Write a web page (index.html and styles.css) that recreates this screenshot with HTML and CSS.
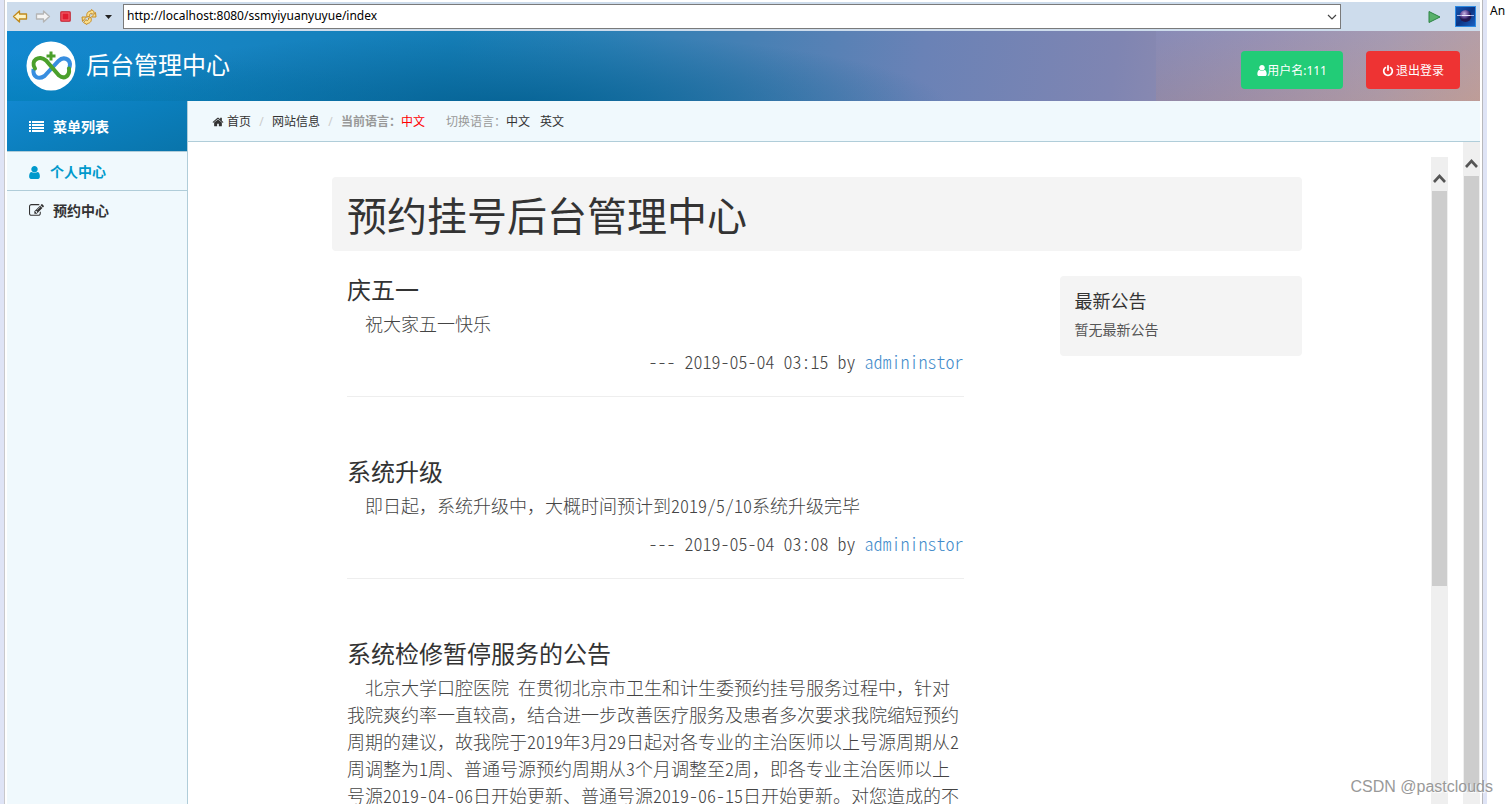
FILE: index.html
```html
<!DOCTYPE html>
<html lang="zh-CN">
<head>
<meta charset="utf-8">
<title>后台管理中心</title>
<link rel="stylesheet" href="styles.css">
</head>
<body>
<svg class="defs" width="0" height="0" aria-hidden="true">
  <symbol id="user" viewBox="0 0 1280 1792"><path d="M1280 1399q0 109-62.500 187t-150.500 78h-854q-88 0-150.500-78t-62.500-187q0-85 8.500-160.500t31.500-152 58.500-131 94-89 134.500-34.500q131 128 313 128t313-128q76 0 134.500 34.500t94 89 58.500 131 31.500 152 8.500 160.500zm-256-887q0 159-112.500 271.500t-271.500 112.500-271.500-112.500-112.500-271.500 112.500-271.500 271.500-112.500 271.500 112.500 112.500 271.500z"/></symbol>
  <symbol id="up" viewBox="0 0 17 34"><path d="M3 25l5.500-6 5.500 6" fill="none" stroke="#555" stroke-width="2.600"/></symbol>
</svg>
<div class="window">
  <div class="rail rail-left"></div>
  <div class="browser">
    <form class="toolbar">
      <button type="button" class="tool" aria-label="后退"><svg width="16" height="16" viewBox="0 0 16 16"><path d="M1.500 7.500l6-5.500v3h7v5h-7v3z" fill="#fdf3c4" stroke="#c08a1e" stroke-width="1.300" stroke-linejoin="round"/></svg></button>
      <button type="button" class="tool" aria-label="前进"><svg width="16" height="16" viewBox="0 0 16 16"><path d="M14.500 7.500l-6-5.500v3h-7v5h7v3z" fill="#f4f4f4" stroke="#b4b4b4" stroke-width="1.300" stroke-linejoin="round"/></svg></button>
      <button type="button" class="tool" aria-label="停止"><svg width="16" height="16" viewBox="0 0 16 16"><rect x="2.500" y="2.500" width="10" height="10" rx="1" fill="#e01c30" stroke="#c44552"/><rect x="4" y="4" width="7" height="7" fill="none" stroke="#ef6a74"/></svg></button>
      <button type="button" class="tool" aria-label="刷新"><svg width="16" height="16" viewBox="0 0 16 16"><g fill="#fbdf8c" stroke="#c68d25" stroke-linejoin="round"><path d="M6 8c-1-3.500 1-6 4-6l.5-1.500 3 2.500-2.500 2.500-.5-1.200c-1.500 0-2.200 1.200-1.700 3z"/><path d="M14.500 3.500l.5 4.500h-4.500l1.500-1.500z"/><path d="M10 8.500c1 3.500-.5 5.500-3.500 6l-.5 1-3.500-2 2.500-3 .8 1.200c1.500-.2 2-1.200 1.700-2.700z"/><path d="M1.500 12.500l-.5-4.500h4.500l-1.500 1.500z"/></g></svg></button>
      <button type="button" class="tool tool-small" aria-label="更多"><svg width="9" height="16" viewBox="0 0 9 16"><path d="M1 6h7l-3.500 4z" fill="#222"/></svg></button>
      <div class="address">
        <input type="text" aria-label="地址" value="http://localhost:8080/ssmyiyuanyuyue/index">
        <button type="button" class="drop" aria-label="历史"><svg width="10" height="8" viewBox="0 0 10 8"><path d="M1 2l4 4 4-4" fill="none" stroke="#444" stroke-width="1.200"/></svg></button>
      </div>
      <button type="submit" class="tool go" aria-label="转到"><svg width="16" height="16" viewBox="0 0 16 16"><path d="M3 2.500l11 5.500-11 5.500z" fill="#58b06b" stroke="#2c8445" stroke-linejoin="round"/></svg></button>
      <svg class="globe" width="21" height="21" viewBox="0 0 21 21"><defs><linearGradient id="sky" x2="1" y2="1"><stop stop-color="#1559b4"/><stop offset=".5" stop-color="#0c3484"/><stop offset="1" stop-color="#1b66c8"/></linearGradient><radialGradient id="ball" cx=".4" cy=".3"><stop stop-color="#c7b4e0"/><stop offset=".6" stop-color="#6a4f9c"/><stop offset="1" stop-color="#241851"/></radialGradient></defs><rect x=".5" y=".5" width="20" height="20" fill="url(#sky)" stroke="#2d8ce4"/><circle cx="10.500" cy="10" r="6" fill="url(#ball)"/><path d="M2 9.500h17" stroke="#a9b5e8"/><path d="M7 9.500h8" stroke="#f2eaff"/></svg>
    </form>
    <header class="header">
      <svg class="logo" width="50" height="50" viewBox="0 0 50 50"><circle cx="25" cy="25" r="24.500" fill="#fff"/><g fill="none" stroke-width="4" stroke-linecap="butt"><path d="M7.500 28c-1 8 5 11 11 7l14-15c5-5 11-2 11.500 3 0 2-.5 4-1.500 6" stroke="#388ee0"/><path d="M9 27.500c-5-8 4-14 11-8l13 15c5 4 11 1 10-7" stroke="#4ba02c" stroke-linecap="round"/><path d="M25 10.500v9M20.500 15h9" stroke="#4ba02c" stroke-width="3"/></g></svg>
      <h1 class="brand">后台管理中心</h1>
      <button type="button" class="btn btn-user"><svg width="10" height="13"><use href="#user"/></svg>用户名:111</button>
      <button type="button" class="btn btn-exit"><svg class="power" width="12" height="12" viewBox="0 0 1792 1792"><path d="M1664 896q0 156-61 298t-164 245-245 164-298 61-298-61-245-164-164-245-61-298q0-182 80.500-343t226.500-270q43-32 95.500-25t83.500 50q32 42 24.500 94.500t-49.500 84.500q-98 74-151.500 181t-53.500 228q0 104 40.500 198.500t109.500 163.500 163.500 109.500 198.500 40.500 198.500-40.500 163.500-109.500 109.500-163.500 40.500-198.500q0-121-53.500-228t-151.500-181q-42-32-49.500-84.500t24.500-94.500q31-43 84-50t95 25q146 109 226.500 270t80.500 343zm-640-768v640q0 52-38 90t-90 38-90-38-38-90v-640q0-52 38-90t90-38 90 38 38 90z"/></svg>退出登录</button>
    </header>
    <div class="body">
      <nav class="sidebar">
        <div class="menu-title"><svg width="15" height="14" viewBox="0 0 15 14"><path d="M0 1h2v2h-2zM3 1h12v2h-12zM0 4h2v2h-2zM3 4h12v2h-12zM0 7h2v2h-2zM3 7h12v2h-12zM0 10h2v2h-2zM3 10h12v2h-12z"/></svg>菜单列表</div>
        <a class="item active" href="#me"><svg width="11" height="15"><use href="#user"/></svg>个人中心</a>
        <a class="item" href="#book"><svg width="15" height="15" viewBox="0 0 1792 1792"><path d="M888 1184l116-116-152-152-116 116v56h96v96h56zm440-720q-16-16-33 1l-350 350q-17 17-1 33t33-1l350-350q17-17 1-33zm80 594v190q0 119-84.500 203.500t-203.500 84.500h-832q-119 0-203.500-84.500t-84.500-203.500v-832q0-119 84.500-203.500t203.500-84.500h832q63 0 117 25 15 7 18 23 3 17-9 29l-49 49q-14 14-32 8-23-6-45-6h-832q-66 0-113 47t-47 113v832q0 66 47 113t113 47h832q66 0 113-47t47-113v-126q0-13 9-22l64-64q15-15 35-7t20 29zm-96-738l288 288-672 672h-288v-288zm444 132l-92 92-288-288 92-92q28-28 68-28t68 28l152 152q28 28 28 68t-28 68z"/></svg>预约中心</a>
      </nav>
      <div class="main">
        <div class="crumbs">
          <a href="#home"><svg width="12" height="12" viewBox="0 0 1792 1792"><path d="M1472 992v480q0 26-19 45t-45 19h-384v-384h-256v384h-384q-26 0-45-19t-19-45v-480q0-1 .5-3t.5-3l575-474 575 474q1 2 1 6zm223-69l-62 74q-8 9-21 11h-3q-13 0-21-7l-692-577-692 577q-12 8-24 7-13-2-21-11l-62-74q-8-10-7-23.500t11-21.500l719-599q32-26 76-26t76 26l244 204v-195q0-14 9-23t23-9h192q14 0 23 9t9 23v408l219 182q10 8 11 21.500t-7 23.500z"/></svg>首页</a>
          <span class="slash">/</span>
          <a href="#site">网站信息</a>
          <span class="slash">/</span>
          <span class="label current">当前语言：</span><span class="lang">中文</span>
          <span class="label switch">切换语言：</span><a href="#zh">中文</a><a class="en" href="#en">英文</a>
        </div>
        <div class="outer">
          <div class="frame">
            <div class="page">
              <div class="container">
                <h2 class="hero">预约挂号后台管理中心</h2>
                <div class="row">
                  <div class="posts">
                    <article class="post">
                      <h3>庆五一</h3>
                      <p class="text">祝大家五一快乐</p>
                      <p class="meta">--- 2019-05-04 03:15 by <a href="#admin">admininstor</a></p>
                    </article>
                    <article class="post">
                      <h3>系统升级</h3>
                      <p class="text">即日起，系统升级中，大概时间预计到<span class="num">2019/5/10</span>系统升级完毕</p>
                      <p class="meta">--- 2019-05-04 03:08 by <a href="#admin">admininstor</a></p>
                    </article>
                    <article class="post">
                      <h3>系统检修暂停服务的公告</h3>
                      <p class="text">北京大学口腔医院<span class="num"> </span>在贯彻北京市卫生和计生委预约挂号服务过程中，针对我院爽约率一直较高，结合进一步改善医疗服务及患者多次要求我院缩短预约周期的建议，故我院于<span class="num">2019</span>年<span class="num">3</span>月<span class="num">29</span>日起对各专业的主治医师以上号源周期从<span class="num">2</span>周调整为<span class="num">1</span>周、普通号源预约周期从<span class="num">3</span>个月调整至<span class="num">2</span>周，即各专业主治医师以上号源<span class="num">2019-04-06</span>日开始更新、普通号源<span class="num">2019-06-15</span>日开始更新。对您造成的不</p>
                    </article>
                  </div>
                  <aside class="notice">
                    <h4>最新公告</h4>
                    <p>暂无最新公告</p>
                  </aside>
                </div>
              </div>
            </div>
            <div class="scroll"><svg width="17" height="34"><use href="#up"/></svg><div class="thumb thumb-inner"></div></div>
          </div>
          <div class="scroll"><svg width="17" height="34"><use href="#up"/></svg><div class="thumb thumb-outer"></div></div>
        </div>
      </div>
    </div>
  </div>
  <div class="rail rail-right"></div>
  <div class="side-view">An</div>
  <div class="watermark">CSDN @pastclouds</div>
</div>
</body>
</html>
```
FILE: styles.css
```css
* { box-sizing: border-box; }
body, h1, h2, h3, h4, p { margin: 0; font-weight: 400; }
body {
  background: #fff;
  color: #333;
  font: 12px/20px "Noto Sans", "Noto Sans CJK SC", sans-serif;
}
a { color: inherit; text-decoration: none; }
button { border: 0; padding: 0; background: none; font: inherit; color: inherit; }
svg { display: block; flex: none; fill: currentColor; }
.defs { position: absolute; }

.window { position: relative; display: flex; height: 100vh; overflow: hidden; }
.rail { flex: none; background: #dfe4f6; }
.rail-left { width: 5px; border-right: 1px solid #c8c8cc; margin-right: 2px; }
.rail-right { width: 5px; border-left: 1px solid #b8b8bc; margin-left: 2px; }
.side-view { flex: none; width: 21px; padding: 1px 0 0 3px; color: #000; }
.browser { flex: 1; min-width: 0; display: flex; flex-direction: column; padding-top: 2px; }

.toolbar { flex: none; display: flex; align-items: center; height: 29px; padding: 0 4px 0 5px; background: #cddcec; }
.tool { width: 16px; margin-right: 7px; }
.tool.tool-small { width: 9px; margin-right: 10px; }
.address { flex: 1; display: flex; height: 25px; border: 1px solid #7a7a7a; background: #fff; margin-right: 85px; }
.address input { flex: 1; min-width: 0; border: 0; outline: 0; padding: 0 3px 2px; background: none; color: #000; font: 12px "Noto Sans", sans-serif; }
.drop { width: 17px; display: flex; align-items: center; justify-content: center; }
.tool.go { margin-right: 13px; }

.header {
  flex: none; display: flex; align-items: center; height: 70px; padding: 0 20px 0 19px; color: #fff;
  background:
    radial-gradient(ellipse 30% 110% at 34% 110%, rgba(3, 96, 145, .9), rgba(3, 96, 145, 0)),
    radial-gradient(ellipse 25% 90% at 4% 120%, rgba(0, 125, 180, .8), rgba(0, 125, 180, 0)),
    linear-gradient(to bottom, rgba(144, 150, 200, .25), rgba(176, 140, 140, .25)) right / 22% 100% no-repeat,
    linear-gradient(100deg, #1288d0 0%, #1684c2 15%, #167fb8 30%, #2a80b6 40%, #4680b4 50%, #6a82b6 62%, #7f85b2 75%, #9a90ae 85%, #ad9cab 93%, #c3a29b 100%);
}
.brand { flex: 1; margin: 0 0 2px 10px; font-size: 24px; line-height: 36px; }
.btn { display: flex; align-items: center; justify-content: center; height: 38px; margin-top: 8px; border-radius: 4px; padding: 1px 16px 0; }
.btn-user { background: #22cc77; margin-right: 23px; }
.btn-exit { background: #ee3333; gap: 2px; }

.body { flex: 1; min-height: 0; display: flex; }
.sidebar { flex: none; width: 181px; border-right: 1px solid #b0cdd9; background: #f0f9fd; font-size: 14px; font-weight: 700; }
.menu-title, .item { display: flex; align-items: center; border-bottom: 1px solid #b0cdd9; padding: 2px 0 0 22px; }
.menu-title { height: 51px; gap: 9px; color: #fff; background: linear-gradient(160deg, #1288d0, #0b7fbd 50%, #0974aa); }
.item { height: 39px; gap: 9px; }
.item.active { color: #0099cc; gap: 10px; }
.item:last-child { border-bottom: 0; padding-top: 0; }

.main { flex: 1; min-width: 0; display: flex; flex-direction: column; }
.crumbs { flex: none; display: flex; align-items: center; height: 41px; padding: 2px 0 0 24px; border-bottom: 1px solid #b0cdd9; background: #f0f9fd; }
.crumbs a { display: flex; align-items: center; gap: 3px; }
.slash { width: 21px; text-align: center; color: #ccc; }
.label { color: #999; }
.current { font-weight: 700; }
.lang { color: #f00; margin-right: 21px; }
.crumbs .en { margin-left: 10px; }

.outer { flex: 1; min-height: 0; display: flex; }
.frame { flex: 1; min-width: 0; display: flex; padding: 15px 15px 0; }
.page { flex: 1; min-width: 0; overflow: hidden; padding-top: 20px; }
.container { max-width: 970px; margin: 0 auto; }
.hero { padding: 9px 15px 5px; border-radius: 4px; background: #f4f4f4; font-size: 40px; line-height: 60px; }
.row { display: flex; align-items: flex-start; justify-content: space-between; margin-top: 25px; }
.posts { width: 66.66%; padding: 0 15px; }
.post { border-bottom: 1px solid #eee; padding-bottom: 21px; margin-bottom: 61px; }
.post h3 { font-size: 24px; line-height: 28px; }
.text, .meta { font: 300 18px/27px "Noto Sans CJK SC", sans-serif; color: #444; }
.num, .meta { font-feature-settings: "hwid"; }
.text { margin-top: 6px; text-indent: 18px; word-break: break-all; }
.meta { margin-top: 11px; text-align: right; }
.meta a { color: #428bca; }
.notice { width: 25%; padding: 10px 15px 14px; border-radius: 4px; background: #f4f4f4; }
.notice h4 { font-size: 18px; line-height: 31px; }
.notice p { font-size: 14px; line-height: 25px; color: #555; }

.scroll { flex: none; width: 17px; background: #efefef; }
.thumb { margin: 0 1px; background: #cdcdcd; }
.thumb-inner { height: 61%; }
.thumb-outer { height: 93%; }

.watermark { position: absolute; right: 15px; bottom: 7px; font: 16px/20px "Liberation Sans", sans-serif; color: #999; text-shadow: 1px 1px 1px #fff; }
```
